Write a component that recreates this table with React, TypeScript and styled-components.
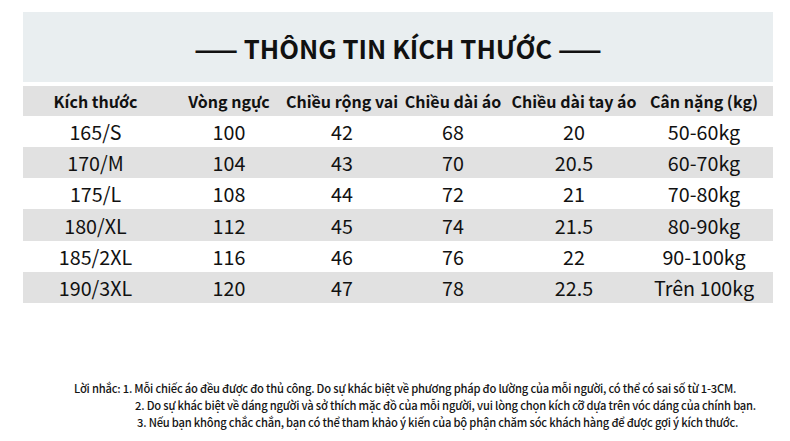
import React from "react";
import styled, { createGlobalStyle } from "styled-components";

const Global = createGlobalStyle`
  html, body { margin: 0; padding: 0; background: #ffffff; }
  body { font-family: "Noto Sans CJK SC", "Noto Sans", sans-serif; color: #111; }
`;

const Page = styled.div`
  width: 790px;
  height: 441px;
  box-sizing: border-box;
  padding: 12px 17px 0 23px;
  display: flex;
  flex-direction: column;
  overflow: hidden;
`;

const Banner = styled.div`
  height: 70px;
  background: #e9eef0;
  display: flex;
  align-items: center;
  justify-content: center;
  font-size: 25.7px;
  font-weight: 700;
  color: #111;
`;

const Table = styled.div`
  margin-top: 4px;
  display: flex;
  flex-direction: column;
`;

const Row = styled.div<{ $shade: boolean; $head?: boolean }>`
  display: grid;
  grid-template-columns: 145px 122px 104px 118px 124px 136px;
  height: ${(p) => (p.$head ? "30px" : "31.17px")};
  align-items: center;
  background: ${(p) => (p.$shade ? "#e1e1e1" : "transparent")};
`;

const Cell = styled.div<{ $head?: boolean }>`
  display: flex;
  justify-content: center;
  white-space: nowrap;
  font-size: ${(p) => (p.$head ? "16px" : "19.7px")};
  font-weight: ${(p) => (p.$head ? 700 : 400)};
  color: #111;
`;

const Notes = styled.div`
  margin-top: 77px;
  display: flex;
  flex-direction: column;
  font-size: 11.2px;
  letter-spacing: -0.2px;
  line-height: 17px;
  font-weight: 500;
  color: #151515;
`;

const Line = styled.div<{ $indent: number }>`
  padding-left: ${(p) => p.$indent}px;
  white-space: nowrap;
`;

const headers = [
  "Kích thước",
  "Vòng ngực",
  "Chiều rộng vai",
  "Chiều dài áo",
  "Chiều dài tay áo",
  "Cân nặng (kg)",
];

const rows = [
  ["165/S", "100", "42", "68", "20", "50-60kg"],
  ["170/M", "104", "43", "70", "20.5", "60-70kg"],
  ["175/L", "108", "44", "72", "21", "70-80kg"],
  ["180/XL", "112", "45", "74", "21.5", "80-90kg"],
  ["185/2XL", "116", "46", "76", "22", "90-100kg"],
  ["190/3XL", "120", "47", "78", "22.5", "Trên 100kg"],
];

const notes: [number, string][] = [
  [51, "Lời nhắc: 1. Mỗi chiếc áo đều được đo thủ công. Do sự khác biệt về phương pháp đo lường của mỗi người, có thể có sai số từ 1-3CM."],
  [112, "2. Do sự khác biệt về dáng người và sở thích mặc đồ của mỗi người, vui lòng chọn kích cỡ dựa trên vóc dáng của chính bạn."],
  [114, "3. Nếu bạn không chắc chắn, bạn có thể tham khảo ý kiến của bộ phận chăm sóc khách hàng để được gợi ý kích thước."],
];

export default function App() {
  return (
    <>
      <Global />
      <Page>
        <Banner>—— THÔNG TIN KÍCH THƯỚC ——</Banner>
        <Table>
          <Row $shade $head>
            {headers.map((h) => (
              <Cell $head key={h}>{h}</Cell>
            ))}
          </Row>
          {rows.map((r, i) => (
            <Row $shade={i % 2 === 1} key={r[0]}>
              {r.map((c, j) => (
                <Cell key={j}>{c}</Cell>
              ))}
            </Row>
          ))}
        </Table>
        <Notes>
          {notes.map(([ind, t]) => (
            <Line $indent={ind} key={ind}>{t}</Line>
          ))}
        </Notes>
      </Page>
    </>
  );
}
